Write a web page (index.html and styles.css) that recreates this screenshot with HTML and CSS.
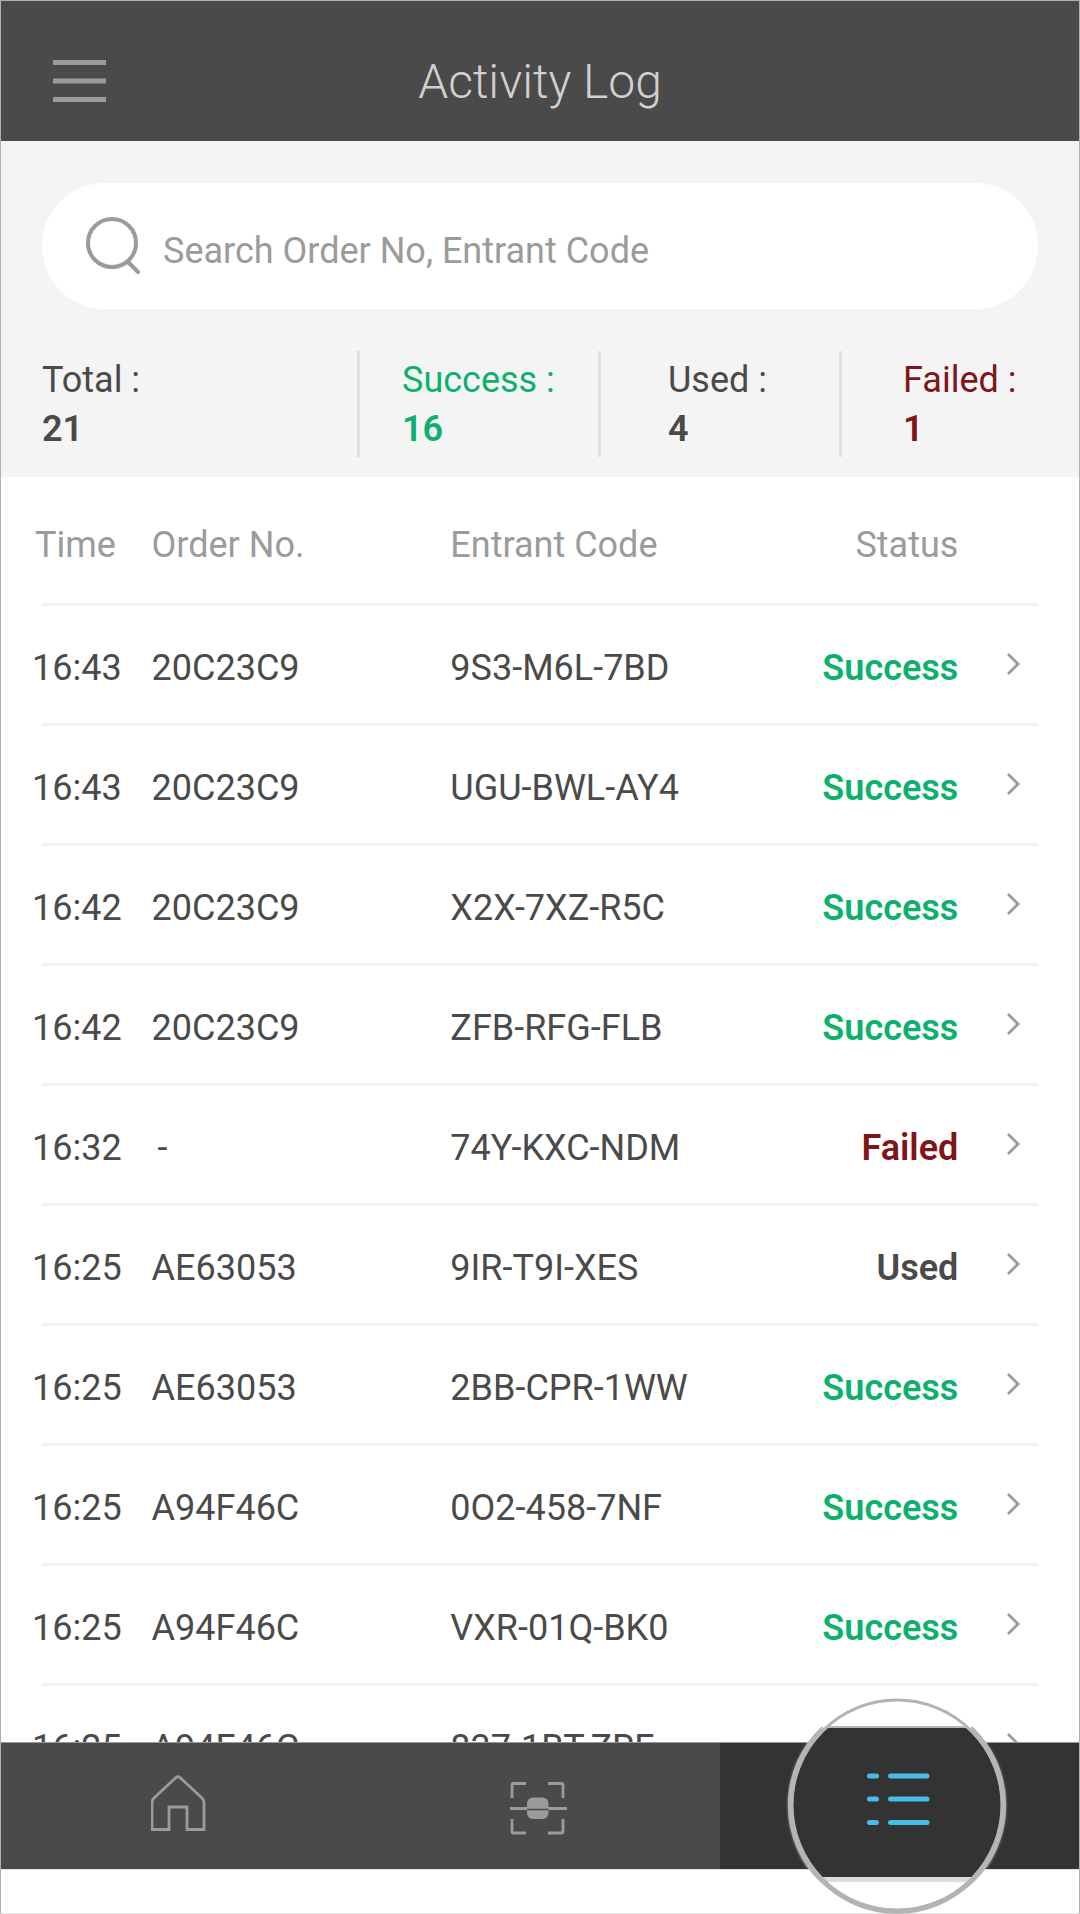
FILE: index.html
```
<!DOCTYPE html>
<html lang="en">
<head>
  <meta charset="UTF-8">
  <meta name="viewport" content="width=device-width, initial-scale=1">
  <title>Activity Log</title>
  <link rel="stylesheet" href="styles.css">
</head>
<body>
  <svg width="0" height="0" class="sprite">
    <symbol id="chevron" viewBox="0 0 14 22">
      <path d="M2 1 L12 11 L2 21" fill="none" stroke="#9b9b9b" stroke-width="2.8"/>
    </symbol>
  </svg>

  <div class="screen">
    <header class="header">
      <button class="menu-btn" aria-label="Menu">
        <svg width="53" height="42" viewBox="0 0 53 42">
          <path d="M0 2.5H53M0 21H53M0 39.5H53" stroke="#9b9b9b" stroke-width="5"/>
        </svg>
      </button>
      <h1>Activity Log</h1>
    </header>

    <section class="summary">
      <label class="search">
        <svg width="56" height="60" viewBox="0 0 56 60" fill="none" stroke="#9b9b9b">
          <circle cx="27" cy="27" r="24" stroke-width="4"/>
          <path d="M43 46 L53 56" stroke-width="4" stroke-linecap="round"/>
        </svg>
        <input type="text" placeholder="Search Order No, Entrant Code" aria-label="Search">
      </label>
      <div class="stats">
        <div class="stat total">Total : <strong>21</strong></div>
        <div class="stat success">Success : <strong>16</strong></div>
        <div class="stat used">Used : <strong>4</strong></div>
        <div class="stat failed">Failed : <strong>1</strong></div>
      </div>
    </section>

    <main class="log">
      <table>
        <thead>
          <tr><th class="time">Time</th><th class="order">Order No.</th><th class="code">Entrant Code</th><th class="status">Status</th><th class="more"></th></tr>
        </thead>
        <tbody>
          <tr><td>16:43</td><td>20C23C9</td><td>9S3-M6L-7BD</td><td class="status success">Success</td><td class="more"><svg><use href="#chevron"/></svg></td></tr>
          <tr><td>16:43</td><td>20C23C9</td><td>UGU-BWL-AY4</td><td class="status success">Success</td><td class="more"><svg><use href="#chevron"/></svg></td></tr>
          <tr><td>16:42</td><td>20C23C9</td><td>X2X-7XZ-R5C</td><td class="status success">Success</td><td class="more"><svg><use href="#chevron"/></svg></td></tr>
          <tr><td>16:42</td><td>20C23C9</td><td>ZFB-RFG-FLB</td><td class="status success">Success</td><td class="more"><svg><use href="#chevron"/></svg></td></tr>
          <tr><td>16:32</td><td class="none">-</td><td>74Y-KXC-NDM</td><td class="status failed">Failed</td><td class="more"><svg><use href="#chevron"/></svg></td></tr>
          <tr><td>16:25</td><td>AE63053</td><td>9IR-T9I-XES</td><td class="status used">Used</td><td class="more"><svg><use href="#chevron"/></svg></td></tr>
          <tr><td>16:25</td><td>AE63053</td><td>2BB-CPR-1WW</td><td class="status success">Success</td><td class="more"><svg><use href="#chevron"/></svg></td></tr>
          <tr><td>16:25</td><td>A94F46C</td><td>0O2-458-7NF</td><td class="status success">Success</td><td class="more"><svg><use href="#chevron"/></svg></td></tr>
          <tr><td>16:25</td><td>A94F46C</td><td>VXR-01Q-BK0</td><td class="status success">Success</td><td class="more"><svg><use href="#chevron"/></svg></td></tr>
          <tr><td>16:25</td><td>A94F46C</td><td>837-1BT-ZRF</td><td class="status success">Success</td><td class="more"><svg><use href="#chevron"/></svg></td></tr>
        </tbody>
      </table>
    </main>

    <nav class="tabs">
      <a href="#" aria-label="Home">
        <svg width="60" height="64" viewBox="3 2 60 64">
          <path d="M4 57.5 V31 Q4 28 6 26 L28 5.5 Q30 4 32 5.5 L54 26 Q56 28 56 31 V57.5 H39 V35 H21 V57.5 Z" fill="none" stroke="#9b9b9b" stroke-width="2.8"/>
        </svg>
      </a>
      <a href="#" aria-label="Scan">
        <svg width="60" height="64" viewBox="2 1 60 64">
          <path d="M4 25 V12 Q4 10.5 5.5 10.5 H18 M40 10.5 H53.5 Q55 10.5 55 12 V25 M4 46 V58.5 Q4 60 5.5 60 H18 M40 60 H53.5 Q55 60 55 58.5 V46" fill="none" stroke="#9b9b9b" stroke-width="2.8"/>
          <rect x="19" y="24.500" width="21.5" height="21.5" rx="6" fill="#9b9b9b"/>
          <path d="M1 35.5 H19 M40 35.5 H59" stroke="#9b9b9b" stroke-width="2.8"/>
          <path d="M19 36.5 H40.5" stroke="#4a4a4a" stroke-width="1.5"/>
        </svg>
      </a>
      <a href="#" class="active" aria-label="Activity log">
        <!-- magnified view of the active tab -->
        <svg class="lens" width="228" height="216" viewBox="0 0 228 216">
          <defs>
            <clipPath id="inside"><circle cx="112" cy="107.5" r="104"/></clipPath>
            <clipPath id="band"><rect x="0" y="44" width="228" height="126"/></clipPath>
            <filter id="soft"><feGaussianBlur stdDeviation="1.5"/></filter>
          </defs>
          <circle clip-path="url(#band)" cx="112" cy="107.5" r="106" fill="none" stroke="#d0d0d0" stroke-width="5" filter="url(#soft)"/>
          <circle cx="112" cy="107.5" r="104" fill="#fff"/>
          <g clip-path="url(#inside)">
            <rect y="28" width="228" height="2" fill="#b5b5b5"/>
            <rect y="30" width="228" height="149" fill="#333"/>
            <rect y="179" width="228" height="5" fill="#dcdcdc"/>
          </g>
          <circle cx="112" cy="107" r="105" fill="none" stroke="#b3b3b3" stroke-width="3"/>
          <path d="M38.5 30 A106 106 0 0 0 38.5 184 M185.5 30 A106 106 0 0 1 185.5 184" fill="none" stroke="#b5b5b5" stroke-width="5"/>
          <path d="M38.5 184 A106 106 0 0 0 185.5 184" fill="none" stroke="#b3b3b3" stroke-width="4.5"/>
          <path d="M84.500 78 H91.500 M105.500 78 H142 M84.500 101 H91.500 M105.500 101 H142 M84.500 124.500 H91.500 M105.500 124.500 H142" stroke="#45bde8" stroke-width="5" stroke-linecap="round"/>
        </svg>
      </a>
    </nav>
  </div>
</body>
</html>
```
FILE: styles.css
```
* {
  box-sizing: border-box;
}
body {
  margin: 0;
  font-family: Roboto, "Liberation Sans", sans-serif;
  font-size: 36px;
  color: #4a4a4a;
  background-color: #fff;
}
.sprite {
  position: absolute;
}
.screen {
  display: flex;
  flex-direction: column;
  height: 100vh;
  padding-bottom: 43px;
  border: 1px solid #b0b0b0;
  border-bottom-color: #e5e5e5;
}

/* top bar */
.header {
  display: grid;
  grid-template-columns: 1fr auto 1fr;
  align-items: center;
  height: 140px;
  padding: 20px 52px 0;
  background-color: #4a4a4a;
  flex-shrink: 0;
}
.menu-btn {
  justify-self: start;
  padding: 0;
  border: none;
  background: none;
  cursor: pointer;
}
.menu-btn svg {
  display: block;
}
h1 {
  margin: 0;
  padding-top: 2px;
  font-size: 48px;
  line-height: 56px;
  font-weight: 300;
  color: #d0d0d0;
}

/* search and totals */
.summary {
  padding: 42px 41px 20px;
  background-color: #f4f4f4;
  flex-shrink: 0;
}
.search {
  display: flex;
  align-items: center;
  gap: 22px;
  height: 126px;
  padding: 0 43px;
  border-radius: 63px;
  background-color: #fff;
}
.search input {
  flex: 1;
  min-width: 0;
  padding: 9px 0 0;
  border: none;
  outline: none;
  background: none;
  font: inherit;
  color: #4a4a4a;
}
.search input::placeholder {
  color: #9b9b9b;
  opacity: 1;
}
.stats {
  display: grid;
  grid-template-columns: 315fr 241fr 241fr 199fr;
  margin-top: 42px;
}
.stat {
  height: 106px;
  padding: 5px 0 0 42px;
  border-left: 3px solid #e0e0e0;
  line-height: 49px;
  white-space: nowrap;
}
.stat.total {
  padding-left: 0;
  border-left: none;
}
.stat.used {
  padding-left: 67px;
}
.stat.failed {
  padding-left: 61px;
}
.stat strong {
  display: block;
  font-weight: 600;
}
.success {
  color: #0eb06d;
}
.failed {
  color: #7f1518;
}

/* log table */
.log {
  flex: 1;
  min-height: 0;
  padding: 0 41px;
  overflow: hidden;
}
table {
  width: 100%;
  table-layout: fixed;
  border-collapse: separate;
  border-spacing: 0;
}
th, td {
  height: 120px;
  padding: 7px 0 0;
  border-bottom: 3px solid #f3f3f3;
  text-align: left;
  white-space: nowrap;
}
th {
  height: 129px;
  padding-top: 10px;
  font-weight: 400;
  color: #9b9b9b;
}
th:first-child {
  text-indent: -7px;
}
td:first-child {
  text-indent: -10px;
}
.time {
  width: 11%;
}
.order {
  width: 30%;
}
td.none {
  padding-left: 6px;
}
.more {
  width: 8%;
}
th.status, td.status {
  text-align: right;
}
td.status {
  font-weight: 600;
}
td.more {
  padding: 0 18px 2px 0;
}
.more svg {
  display: block;
  width: 14px;
  height: 22px;
  margin-left: auto;
}

/* bottom tabs */
.tabs {
  display: flex;
  height: 128px;
  border-top: 1px solid #999;
  border-bottom: 1px solid #e5e5e5;
  flex-shrink: 0;
}
.tabs a {
  position: relative;
  flex: 1;
  display: flex;
  align-items: center;
  justify-content: center;
  background-color: #4a4a4a;
}
.tabs a.active {
  background-color: #333;
}
.lens {
  position: absolute;
}
```
